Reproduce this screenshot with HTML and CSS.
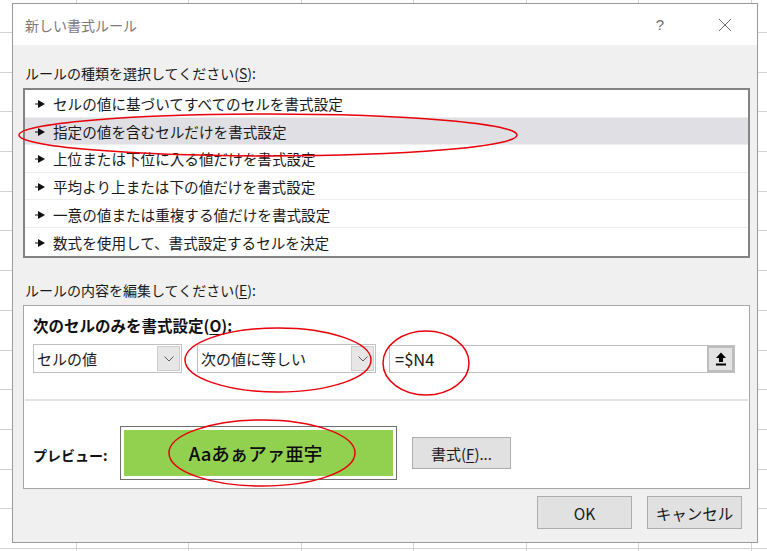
FILE: index.html
```html
<!DOCTYPE html>
<html lang="ja">
<head>
<meta charset="utf-8">
<title>新しい書式ルール</title>
<link rel="stylesheet" href="styles.css">
</head>
<body>
<div class="sheet">
  <div class="dialog">
    <div class="titlebar">
      <span class="title">新しい書式ルール</span>
      <span class="tb-help">?</span>
      <span class="tb-close">
        <svg width="14" height="14" viewBox="0 0 14 14"><path d="M1 1 L13 13 M13 1 L1 13" stroke="#6b6b6b" stroke-width="1" fill="none"/></svg>
      </span>
    </div>
    <div class="body">
      <div class="label label-first">ルールの種類を選択してください(<u>S</u>):</div>
      <div class="list">
        <div class="row"><svg class="arrow" width="10" height="8" viewBox="0 0 10 8"><path d="M0 3.4 H4 V4.6 H0 Z M3 0 L10 4 L3 8 Z" fill="#111"/></svg>セルの値に基づいてすべてのセルを書式設定</div>
        <div class="row selected"><svg class="arrow" width="10" height="8" viewBox="0 0 10 8"><path d="M0 3.4 H4 V4.6 H0 Z M3 0 L10 4 L3 8 Z" fill="#111"/></svg>指定の値を含むセルだけを書式設定</div>
        <div class="row"><svg class="arrow" width="10" height="8" viewBox="0 0 10 8"><path d="M0 3.4 H4 V4.6 H0 Z M3 0 L10 4 L3 8 Z" fill="#111"/></svg>上位または下位に入る値だけを書式設定</div>
        <div class="row"><svg class="arrow" width="10" height="8" viewBox="0 0 10 8"><path d="M0 3.4 H4 V4.6 H0 Z M3 0 L10 4 L3 8 Z" fill="#111"/></svg>平均より上または下の値だけを書式設定</div>
        <div class="row"><svg class="arrow" width="10" height="8" viewBox="0 0 10 8"><path d="M0 3.4 H4 V4.6 H0 Z M3 0 L10 4 L3 8 Z" fill="#111"/></svg>一意の値または重複する値だけを書式設定</div>
        <div class="row last"><svg class="arrow" width="10" height="8" viewBox="0 0 10 8"><path d="M0 3.4 H4 V4.6 H0 Z M3 0 L10 4 L3 8 Z" fill="#111"/></svg>数式を使用して、書式設定するセルを決定</div>
      </div>
      <div class="label label-second">ルールの内容を編集してください(<u>E</u>):</div>
      <div class="panel">
        <div class="panel-top">
          <div class="bold-label">次のセルのみを書式設定(<u>O</u>):</div>
          <div class="controls">
            <div class="combo combo-1">
              <span class="combo-text">セルの値</span>
              <span class="combo-btn"><svg width="10" height="6" viewBox="0 0 10 6"><path d="M0.5 0.5 L5 5 L9.5 0.5" stroke="#5a5a5a" stroke-width="1" fill="none"/></svg></span>
            </div>
            <div class="combo combo-2">
              <span class="combo-text">次の値に等しい</span>
              <span class="combo-btn"><svg width="10" height="6" viewBox="0 0 10 6"><path d="M0.5 0.5 L5 5 L9.5 0.5" stroke="#5a5a5a" stroke-width="1" fill="none"/></svg></span>
            </div>
            <div class="refbox">
              <span class="ref-text">=$N4</span>
              <span class="ref-btn"><svg width="12" height="14" viewBox="0 0 12 14"><path d="M6 0.5 L11 6 H8 V10 H4 V6 H1 Z" fill="#000"/><rect x="1" y="11.5" width="10" height="2" fill="#000"/></svg></span>
            </div>
          </div>
        </div>
        <div class="separator"></div>
        <div class="preview-row">
          <span class="preview-label">プレビュー:</span>
          <div class="preview-box"><div class="preview-fill">Aaあぁアァ亜宇</div></div>
          <span class="btn btn-format">書式(<u>F</u>)...</span>
        </div>
      </div>
      <div class="footer">
        <span class="btn btn-foot">OK</span>
        <span class="btn btn-foot">キャンセル</span>
      </div>
    </div>
  </div>
  <svg class="marks" width="767" height="551" viewBox="0 0 767 551">
    <ellipse cx="268" cy="135" rx="249" ry="21" fill="none" stroke="#e8000b" stroke-width="1.5"/>
    <ellipse cx="278" cy="360" rx="93" ry="32" fill="none" stroke="#e8000b" stroke-width="1.5"/>
    <ellipse cx="426" cy="363" rx="43" ry="32" fill="none" stroke="#e8000b" stroke-width="1.5"/>
    <ellipse cx="262" cy="453" rx="93" ry="33" fill="none" stroke="#e8000b" stroke-width="1.5"/>
  </svg>
</div>
</body>
</html>
```
FILE: styles.css
```css
* { box-sizing: border-box; }
html, body { margin: 0; padding: 0; }
body {
  width: 767px;
  height: 551px;
  overflow: hidden;
  font-family: "Noto Sans CJK JP", "Noto Sans", sans-serif;
  color: #1a1a1a;
  background-color: #fff;
  background-image:
    repeating-linear-gradient(to right, transparent 0 76px, #d2d2d2 76px 77px, transparent 77px 112.5px),
    repeating-linear-gradient(to bottom, transparent 0 32px, #d2d2d2 32px 33px, transparent 33px 39.7px);
}
.sheet {
  position: relative;
  width: 767px;
  height: 551px;
  padding: 3px 0 0 12px;
}
.dialog {
  width: 746px;
  height: 540px;
  border: 1px solid #9a9a9a;
  background: #f0f0f0;
  display: flex;
  flex-direction: column;
}
.titlebar {
  height: 41px;
  background: #fff;
  display: flex;
  align-items: center;
  padding-left: 12px;
  flex: none;
}
.title {
  font-size: 14px;
  color: #7a7a7a;
  flex: 1;
  line-height: 20px;
}
.tb-help {
  width: 30px;
  text-align: center;
  font-family: "Liberation Sans", sans-serif;
  font-size: 15px;
  color: #6b6b6b;
  margin-right: 35px;
}
.tb-close {
  width: 30px;
  display: flex;
  justify-content: center;
  margin-right: 17px;
}
.body {
  padding: 0 7px 0 10px;
  display: flex;
  flex-direction: column;
}
.label {
  font-size: 14px;
  line-height: 20px;
  padding-left: 2px;
  color: #1a1a1a;
}
.label u, .bold-label u, .btn u { text-decoration-thickness: 1px; text-underline-offset: 2px; }
.label-first { margin-top: 18px; }
.label-second { margin-top: 22px; }
.list {
  margin-top: 5px;
  border: 2px solid #838383;
  background: #fff;
  height: 170px;
  display: flex;
  flex-direction: column;
}
.row {
  height: 27.6px;
  display: flex;
  align-items: center;
  padding-left: 10px;
  padding-top: 2px;
  font-size: 14.6px;
  line-height: 20px;
  border-bottom: 1px solid #eeeeee;
  color: #1a1a1a;
}
.row.last { border-bottom: none; }
.row.selected { background: #dfdfe4; }
.arrow { margin-right: 8px; flex: none; }
.panel {
  margin-top: 5px;
  border: 1px solid #a6a6a6;
  background: #fff;
  height: 184px;
  display: flex;
  flex-direction: column;
}
.panel-top {
  padding: 9px 9px 0 9px;
  height: 93px;
}
.bold-label {
  font-size: 15.5px;
  font-weight: 700;
  line-height: 20px;
  color: #111;
}
.controls {
  margin-top: 9px;
  display: flex;
  align-items: center;
}
.combo {
  height: 29px;
  border: 1px solid #c0c0c0;
  background: #fff;
  display: flex;
  align-items: stretch;
}
.combo-1 { width: 149px; }
.combo-2 { width: 179px; margin-left: 15px; }
.combo-text {
  flex: 1;
  font-size: 15px;
  line-height: 27px;
  padding-left: 3px;
  color: #1a1a1a;
}
.combo-btn {
  width: 23px;
  margin: 1px;
  background: #e6e6e6;
  border: 1px solid #cdcdcd;
  display: flex;
  align-items: center;
  justify-content: center;
}
.refbox {
  margin-left: 13px;
  width: 346px;
  height: 28px;
  border: 1px solid #c0c0c0;
  background: #fff;
  display: flex;
  align-items: stretch;
}
.ref-text {
  flex: 1;
  font-size: 16.5px;
  line-height: 26px;
  padding-left: 5px;
  color: #1a1a1a;
}
.ref-btn {
  width: 27px;
  margin: 0;
  background: #e3e3e3;
  border: 2px solid #bdbdbd;
  display: flex;
  align-items: center;
  justify-content: center;
}
.separator {
  height: 2px;
  background: #e3e3e3;
  margin: 0 1px;
}
.preview-row {
  display: flex;
  align-items: center;
  padding: 25px 0 0 9px;
}
.preview-label {
  width: 87px;
  font-size: 14px;
  font-weight: 700;
  color: #111;
  line-height: 20px;
  padding-top: 3px;
}
.preview-box {
  width: 277px;
  height: 54px;
  border: 1px solid #6e6e6e;
  padding: 3px;
  background: #fff;
}
.preview-fill {
  height: 100%;
  background: #92d050;
  display: flex;
  align-items: center;
  justify-content: center;
  font-size: 18.5px;
  font-weight: 500;
  color: #0d0d0d;
  padding-right: 6px;
}
.btn {
  display: flex;
  align-items: center;
  justify-content: center;
  background: #e1e1e1;
  border: 1px solid #adadad;
  font-size: 15px;
  color: #1a1a1a;
}
.btn-format {
  margin-left: 15px;
  width: 99px;
  height: 32px;
}
.footer {
  margin-top: 7px;
  display: flex;
  justify-content: flex-end;
  gap: 15px;
  padding-right: 8px;
}
.btn-foot {
  width: 95px;
  height: 33px;
  font-size: 15.5px;
}
.marks {
  position: absolute;
  left: 0;
  top: 0;
  pointer-events: none;
}
```
